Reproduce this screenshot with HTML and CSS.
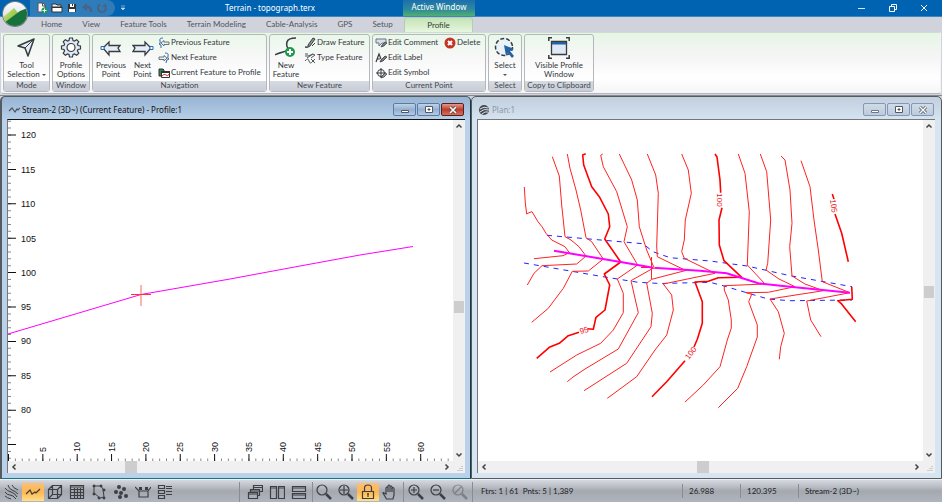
FILE: index.html
```html
<!DOCTYPE html>
<html lang="en">
<head>
<meta charset="utf-8">
<title>Terrain - topograph.terx</title>
<link rel="stylesheet" href="styles.css">
</head>
<body>
<div class="app">
  <header class="titlebar">
    <div class="quick">
      <button class="qbtn" aria-label="New"><svg viewBox="0 0 12 12"><path d="M2 1h5l2 2v7H2z" fill="#f4f6f8" stroke="#555"/><path d="M6.500 1v3h3" fill="none" stroke="#555"/><circle cx="8.500" cy="8.500" r="3" fill="#1f9a4c"/><path d="M8.500 6.500v4M6.500 8.500h4" stroke="#fff"/></svg></button>
      <button class="qbtn" aria-label="Open"><svg viewBox="0 0 12 12"><path d="M1 10V2h4l1 1h4v2" fill="#e9eef4" stroke="#333"/><path d="M1 10V5h10v5z" fill="#fff" stroke="#333"/><path d="M1 5h10v1H1z" fill="#333"/></svg></button>
      <button class="qbtn" aria-label="Save"><svg viewBox="0 0 12 12"><path d="M2 2h8v8H2z" fill="#333"/><path d="M4 2h4v3H4zM3 7h6v3H3z" fill="#fff"/><path d="M6 2h1v2H6z" fill="#333"/></svg></button>
      <button class="qbtn" aria-label="Undo"><svg viewBox="0 0 12 12"><path d="M4 5h3q3 0 3 5" fill="none" stroke="#4a6382" stroke-width="2.500"/><path d="M6 1v8L1 5z" fill="#4a6382"/></svg></button>
      <button class="qbtn" aria-label="Redo"><svg viewBox="0 0 12 12"><path d="M4 2.500a4 4 0 1 0 5 1" fill="none" stroke="#4a6382" stroke-width="2"/><path d="M10 1v4H6z" fill="#4a6382"/></svg></button>
    </div>
    <button class="qmore" aria-label="Customize toolbar"><svg viewBox="0 0 6 6"><path d="M1 1h4M1 3h4L3 5z" stroke="#c5d6e8" stroke-width=".6" fill="#c5d6e8"/></svg></button>
    <h1 class="title">Terrain - topograph.terx</h1>
    <div class="context">Active Window</div>
    <div class="winbtns">
      <button aria-label="Minimize"><svg viewBox="0 0 10 10"><path d="M1 5.500h7" stroke="#d9e8f5"/></svg></button>
      <button aria-label="Restore"><svg viewBox="0 0 10 10"><path d="M1.500 3.500h5v5h-5zM3.500 3V1.500h5v5H7" fill="none" stroke="#fff"/></svg></button>
      <button aria-label="Close"><svg viewBox="0 0 10 10"><path d="M2 2l6 6M8 2L2 8" stroke="#fff"/></svg></button>
    </div>
  </header>
  <button class="orb" aria-label="Application menu"><svg viewBox="0 0 28 28">
    <defs><clipPath id="orb"><circle cx="14" cy="14" r="12"/></clipPath>
    <linearGradient id="sky" x2="0" y2="1"><stop offset="0" stop-color="#fff"/><stop offset="1" stop-color="#c6d4d9"/></linearGradient>
    <linearGradient id="lime" x2="1" y2="1"><stop offset="0" stop-color="#d2ec8c"/><stop offset="1" stop-color="#73ad25"/></linearGradient></defs>
    <circle cx="14" cy="14" r="13" fill="#707d87"/>
    <g clip-path="url(#orb)"><path d="M0 0h28v28H0z" fill="url(#sky)"/><path d="M0 19L13 8l4 5-9 13H0z" fill="url(#lime)"/><path d="M3 23L19 11l5-2 4-1v20H3z" fill="#17713b"/></g></svg></button>

  <nav class="tabs">
    <a href="#">Home</a><a href="#">View</a><a href="#">Feature Tools</a><a href="#">Terrain Modeling</a><a href="#">Cable-Analysis</a><a href="#">GPS</a><a href="#">Setup</a><a href="#" class="on" aria-current="page">Profile</a>
  </nav>

  <section class="ribbon">
    <div class="group g-mode">
      <div class="body">
        <button class="big"><svg viewBox="0 0 22 22"><path d="M19 2L3 9l7 2 3 8z" fill="#e4edf8" stroke="#383c40" stroke-width="1.500" stroke-linejoin="round"/><path d="M18 3l-8 8" stroke="#383c40"/></svg><span>Tool<br>Selection <i class="caret"></i></span></button>
      </div>
      <h2>Mode</h2>
    </div>
    <div class="group g-window">
      <div class="body">
        <button class="big"><svg viewBox="0 0 22 22"><path d="M9.500 1h3l.5 2.500 1.500.6 2.200-1.400 2.100 2.100-1.400 2.200.6 1.500 2.500.5v3l-2.500.5-.6 1.500 1.400 2.200-2.100 2.100-2.200-1.400-1.500.6-.5 2.500h-3L9 17.500l-1.500-.6-2.200 1.400-2.100-2.100L4.600 14 4 12.500 1.500 12V9L4 8.500 4.600 7 3.200 4.800l2.100-2.100 2.200 1.400L9 3.500z" fill="#dfe9f6" stroke="#383c40" stroke-width="1.200"/><circle cx="11" cy="10.500" r="4" fill="#fff" stroke="#383c40" stroke-width="1.200"/></svg><span>Profile<br>Options</span></button>
      </div>
      <h2>Window</h2>
    </div>
    <div class="group g-nav">
      <div class="body">
        <button class="big"><svg viewBox="0 0 22 22"><path d="M3 11l6-6v3.500h11L18 11l2 3.500H9V18z" fill="#e4edf8" stroke="#383c40" stroke-width="1.300"/><path d="M1 9.500h3v3H1z" fill="#fff" stroke="#2a6aad"/></svg><span>Previous<br>Point</span></button>
        <button class="big"><svg viewBox="0 0 22 22"><path d="M19 11l-6-6v3.500H1L3 11l-2 3.500h12V18z" fill="#e4edf8" stroke="#383c40" stroke-width="1.300"/><path d="M18 9.500h3v3h-3z" fill="#fff" stroke="#2a6aad"/></svg><span>Next<br>Point</span></button>
        <div class="stack">
          <button class="small"><svg viewBox="0 0 12 12"><path d="M3 6l3-2.500V5h5v2.500H6V9z" fill="#e4edf8" stroke="#50555b" stroke-width=".8"/><path d="M5 1Q1 1 2 4T1 7q3 0 2 4" fill="none" stroke="#2a6aad"/></svg>Previous Feature</button>
          <button class="small"><svg viewBox="0 0 12 12"><path d="M9 6L6 3.500V5H1v2.500h5V9z" fill="#e4edf8" stroke="#50555b" stroke-width=".8"/><path d="M7 1q4 0 3 3t1 3q-3 0-3 4" fill="none" stroke="#2a6aad"/></svg>Next Feature</button>
          <button class="small"><svg viewBox="0 0 12 12"><path d="M1 2h4l1 1v6H1z" fill="#2f8b57" stroke="#333"/><path d="M3.500 4.500h8v6h-8z" fill="#fff" stroke="#333"/><path d="M3 4h9v2H3z" fill="#333"/><path d="M4 9q2-3 4-1t3-1" fill="none" stroke="#d03030"/></svg>Current Feature to Profile</button>
        </div>
      </div>
      <h2>Navigation</h2>
    </div>
    <div class="group g-feature">
      <div class="body">
        <button class="big"><svg viewBox="0 0 22 22"><path d="M21 1q-8 0-9 4t1 6-5 4-8 3" fill="none" stroke="#383c40" stroke-width="1.500"/><circle cx="15" cy="15" r="5" fill="#1f9a4c"/><path d="M15 12v6M12 15h6" stroke="#fff" stroke-width="2"/></svg><span>New<br>Feature</span></button>
        <div class="stack">
          <button class="small"><svg viewBox="0 0 12 12"><path d="M1 10q4 1 3-2l5-7 2 1-5 7q-2 2-5 1" fill="#90969d" stroke="#383c40"/><path d="M8 9l3-3" stroke="#383c40"/></svg>Draw Feature</button>
          <button class="small"><svg viewBox="0 0 12 12"><path d="M1 2h3M1 4h3l5-2M3 6l6-4 2 1-4 3M1 9q3-4 4 0t4 0l2-2M7 7l4 4" fill="none" stroke="#50555b"/></svg>Type Feature</button>
        </div>
      </div>
      <h2>New Feature</h2>
    </div>
    <div class="group g-point">
      <div class="body">
        <div class="stack">
          <button class="small"><svg viewBox="0 0 12 12"><path d="M1 2h10v4H7L4 9V6H1z" fill="#d4e0ee" stroke="#6c737b"/><path d="M6 10l1-2 3-3 2 1-3 3z" fill="#737b83" stroke="#383c40" stroke-width=".7"/></svg>Edit Comment</button>
          <button class="small"><svg viewBox="0 0 12 12"><path d="M1 10l3-8 2 5M2 7h3" fill="none" stroke="#383c40" stroke-width="1.200"/><path d="M5 10l1-2 4-4 2 1-4 4z" fill="#737b83" stroke="#383c40" stroke-width=".8"/></svg>Edit Label</button>
          <button class="small"><svg viewBox="0 0 12 12"><path d="M6 1v10M1 6h10" stroke="#383c40"/><circle cx="6" cy="6" r="3.500" fill="none" stroke="#383c40"/><path d="M6 11l1-2 3-3 2 1-3 3z" fill="#8d949c" stroke="#383c40" stroke-width=".7"/></svg>Edit Symbol</button>
        </div>
        <div class="stack">
          <button class="small"><svg viewBox="0 0 12 12"><circle cx="6" cy="6" r="5.500" fill="#c33425"/><path d="M4 4l4 4M8 4L4 8" stroke="#fff" stroke-width="2"/></svg>Delete</button>
        </div>
      </div>
      <h2>Current Point</h2>
    </div>
    <div class="group g-select">
      <div class="body">
        <button class="big"><svg viewBox="0 0 22 22"><circle cx="10" cy="10" r="8.500" fill="#e9f1f9" stroke="#383c40" stroke-width="1.500" stroke-dasharray="4 2"/><path d="M10 8l10 4-4 2 4 5-2 2-4-5-2 3z" fill="#2462a4"/></svg><span>Select<br><i class="caret"></i></span></button>
      </div>
      <h2>Select</h2>
    </div>
    <div class="group g-copy">
      <div class="body">
        <button class="big"><svg viewBox="0 0 22 22"><path d="M3.500 4.500h15v13h-15z" fill="#dfe9f6" stroke="#383c40" stroke-width="1.300"/><path d="M4 5h14v2.500H4z" fill="#2462a4"/><path d="M.8 4V.8H4M18 .8h3.200V4M.8 18v3.200H4M21.200 18v3.200H18" fill="none" stroke="#383c40" stroke-width="1.500"/></svg><span>Visible Profile<br>Window</span></button>
      </div>
      <h2>Copy to Clipboard</h2>
    </div>
  </section>

  <main class="desk">
    <section class="pane active">
      <header>
        <svg class="picon" viewBox="0 0 12 12"><path d="M1 7l3-3 3 4 2-3 1 1 2-2" fill="none" stroke="#4b545e" stroke-width="1.200"/></svg>
        <h2>Stream-2 (3D~) (Current Feature) - Profile:1</h2>
        <button aria-label="Minimize window"><svg viewBox="0 0 12 10"><path d="M2.500 5.500h7v2h-7z" fill="#fff" stroke="#505a66"/></svg></button>
        <button aria-label="Maximize window"><svg viewBox="0 0 12 10"><path d="M2.500 1.500h7v6h-7z" fill="#fff" stroke="#505a66"/><path d="M5 4h2v1H5z" stroke="#505a66"/></svg></button>
        <button class="close" aria-label="Close window"><svg viewBox="0 0 12 10"><path d="M3 2l6 6M9 2L3 8" stroke="#5c4040" stroke-width="3"/><path d="M3 2l6 6M9 2L3 8" stroke="#fff" stroke-width="1.600"/></svg></button>
      </header>
      <div class="client">
        <svg class="view" viewBox="8 120 445 341" preserveAspectRatio="xMinYMin meet">
          <path d="M9.500 120.740V461" stroke="#888" stroke-width="3" stroke-dasharray="1 5.880"/>
          <path d="M12 134.500V461" stroke="#111" stroke-width="8" stroke-dasharray="1 33.400"/>
          <path d="M8 460H453" stroke="#888" stroke-width="3" stroke-dasharray="1 5.870"/>
          <path d="M8 457.500H453" stroke="#111" stroke-width="7" stroke-dasharray="1 33.350"/>
          <g class="scale">
            <text x="21" y="138">120</text><text x="21" y="173">115</text><text x="21" y="207">110</text><text x="21" y="242">105</text><text x="21" y="276">100</text><text x="21" y="310">95</text><text x="21" y="344">90</text><text x="21" y="379">85</text><text x="21" y="413">80</text>
            <text transform="translate(46 452) rotate(-90)">5</text><text transform="translate(80 452) rotate(-90)">10</text><text transform="translate(115 452) rotate(-90)">15</text><text transform="translate(149 452) rotate(-90)">20</text><text transform="translate(183 452) rotate(-90)">25</text><text transform="translate(218 452) rotate(-90)">30</text><text transform="translate(252 452) rotate(-90)">35</text><text transform="translate(286 452) rotate(-90)">40</text><text transform="translate(321 452) rotate(-90)">45</text><text transform="translate(355 452) rotate(-90)">50</text><text transform="translate(390 452) rotate(-90)">55</text><text transform="translate(424 452) rotate(-90)">60</text>
          </g>
          <path d="M8 334L141 294.500 230 279 300 266 360 255 413 246.500" fill="none" stroke="#f0f"/>
          <path d="M141 285v21" stroke="#f99" stroke-width="1.500"/><path d="M131 294.500h20" stroke="#f33"/>
        </svg>
        <div class="vbar"><svg viewBox="0 0 12 12"><path d="M3.500 7.500L6 5l2.500 2.500" /></svg><span class="track"><i class="thumb v1"></i></span><svg viewBox="0 0 12 12"><path d="M3.500 4.500L6 7l2.500-2.500"/></svg></div>
        <div class="hbar"><svg viewBox="0 0 12 12"><path d="M7.500 3.500L5 6l2.500 2.500"/></svg><span class="track"><i class="thumb h1"></i></span><svg viewBox="0 0 12 12"><path d="M4.500 3.500L7 6 4.500 8.500"/></svg></div>
        <svg class="grip" viewBox="0 0 12 12"><path d="M9 5v5M7 7v3M5 9v1" stroke="#aaa" stroke-dasharray="1 1"/></svg>
      </div>
    </section>

    <section class="pane">
      <header>
        <svg class="picon" viewBox="0 0 12 12"><circle cx="6" cy="6" r="5" fill="#444b52"/><path d="M2 5q4-3 8-1M2 8q4-4 9-2M4 10q3-3 6-2" fill="none" stroke="#d8e0e8"/></svg>
        <h2>Plan:1</h2>
        <button aria-label="Minimize window"><svg viewBox="0 0 12 10"><path d="M2.500 5.500h7v2h-7z" fill="#fff" stroke="#6c7787"/></svg></button>
        <button aria-label="Maximize window"><svg viewBox="0 0 12 10"><path d="M2.500 1.500h7v6h-7z" fill="#fff" stroke="#505a66"/><path d="M5 4h2v1H5z" stroke="#505a66"/></svg></button>
        <button aria-label="Close window"><svg viewBox="0 0 12 10"><path d="M3 2l6 6M9 2L3 8" stroke="#505a66" stroke-width="3"/><path d="M3 2l6 6M9 2L3 8" stroke="#fff" stroke-width="1.400"/></svg></button>
      </header>
      <div class="client">
        <svg class="view" viewBox="478 120 445 341" preserveAspectRatio="xMinYMin meet">
          <g class="flood">
            <path d="M547 235.300L643 243.700 653 251.700 670 257.700 710 261 747 266 790 275.700 852 286.700"/>
            <path d="M524 263L603 276.700 638 282.300 660 283.500 710 282.300 723 285.700 768 299 790 300.700 852 300"/>
          </g>
          <g class="contour">
            <path d="M524.300 187L525.300 203 526.700 214 529 212.700 532 211.700 538 221.700 542 226.700 546 233.300 551.700 240 565 246.700 569.300 252.700 563 255.700 534 258.700"/>
            <path d="M552.300 156.700L559.300 176 561.700 205 565 236.700 571 240 579 246.700 586 256 576.700 264 542 265.700 534 273.300 527.300 285"/>
            <path d="M567.300 154L570 168.300 576 190 580.700 210 586 237.700 591.700 241.700 603.300 259 588.300 271 572.300 271.300 563.300 288.300 548.300 308.300 531.700 322.300"/>
            <path d="M602.700 154L600.700 155.300 603.300 166.700 616.700 191.700 627.300 226.700 624 241.700 637.700 265 617.300 279 623.300 293.300V312.700L613.300 330 600.700 343.300 576.700 355 550 372"/>
            <path d="M619.300 154L631.700 180 637.300 200 639.300 226.700 646.700 250 654 267.700 631 280.700 638.300 312.700 618.300 349 585 369 573 377 567.300 381.700"/>
            <path d="M647.300 154L655.700 175 658.300 193.300 656.700 246 657.300 256.700 685.700 270.500 651.700 279.300 646.700 283.300 652.300 313.300 651 326.700 626.700 363.300 584 390.700"/>
            <path d="M681.700 154L688.300 170 691.300 193.300 685.300 220 684.300 240 681.700 251.700 684.300 258.300 715 273.300 663.300 284 671.700 295 673.300 310 666.700 335 655 350 636.700 376.700 607.300 398.300"/>
            <path d="M738.300 154L745 173.300 749.300 211.700 747.300 265 765 284 724.300 285.700 724.300 290 728.300 300 731.300 320V328L727.300 340 720 366.700 703.300 385 685 402"/>
            <path d="M760.300 154L766.700 171.700 770.700 220 767.700 263.300 766 270 779 279 795 286.700 768.300 292.300 746 292.700 751.700 294.300 748.700 301.700 757.300 325V337L746.700 366.700 737.700 388.300 718.300 407.700"/>
            <path d="M781 156L785 160 790 190 792 223.300 789.700 246.700 792 276 805 284 823.300 290.700 770 299 778.300 311.700 784.300 333.300 780.700 346.700 779.300 359.300"/>
            <path d="M801 160.700L810 186.700 814 220 818.300 250 822.300 281.700 850 292.700 806.700 301 810.700 320 821 336.700"/>
            <path d="M651.500 257v22M641 267.500h17"/>
          </g>
          <g class="index">
            <path d="M585.700 153.700L582.700 155 583.700 165 591.700 186.700 599.300 196.700 608.300 214 609.700 226.700 604.700 239 620.700 262 604.300 274 609.700 285 605 310 596 317.300 593.300 329.300 587.300 328.700M579 332.300L568.300 335.700 559.300 343.300 549.300 347.300 536.700 358.300"/>
            <path d="M715 154L717 157 720 180 720.700 192.700M722 207.700L719 220 719.300 245 724 260.700 741.700 277.300 718.300 277.700 708.300 281.300 695 282 702.300 301.700V323.300L697.300 339.300 694 347M685 360.700L666.700 381.700 652 396.700"/>
            <path d="M832.300 194L834 199M835 214L841.700 233.300 848.300 261.700M851.700 286.700L852.300 299.300 837.700 300.700 841 303.300 855.700 321.700"/>
          </g>
          <g class="mark">
            <text transform="translate(584 330) rotate(-15)" dy="3">95</text>
            <text transform="translate(720 200) rotate(90)" dy="3">100</text>
            <text transform="translate(690.500 353) rotate(-52)" dy="3">100</text>
            <text transform="translate(834 206) rotate(82)" dy="3">105</text>
          </g>
          <path d="M554 250.700L620.700 262 653.300 267.700 700 270.700 726.700 273.300 758.300 283.300 790 286.700 850 292.700" fill="none" stroke="#f0f" stroke-width="2"/>
          <circle cx="654" cy="267.500" r="1" fill="#ff9c20"/>
        </svg>
        <div class="vbar"><svg viewBox="0 0 12 12"><path d="M3.500 7.500L6 5l2.500 2.500"/></svg><span class="track"><i class="thumb v2"></i></span><svg viewBox="0 0 12 12"><path d="M3.500 4.500L6 7l2.500-2.500"/></svg></div>
        <div class="hbar"><svg viewBox="0 0 12 12"><path d="M7.500 3.500L5 6l2.500 2.500"/></svg><span class="track"><i class="thumb h2"></i></span><svg viewBox="0 0 12 12"><path d="M4.500 3.500L7 6 4.500 8.500"/></svg></div>
        <svg class="grip" viewBox="0 0 12 12"><path d="M9 5v5M7 7v3M5 9v1" stroke="#aaa" stroke-dasharray="1 1"/></svg>
      </div>
    </section>
  </main>

  <footer class="status">
    <div class="tools t1">
      <button aria-label="Plan view"><svg viewBox="0 0 16 16"><path d="M2 4q2 3 6 4t6 5M2 8q2 3 5 3t6 4M2 12q2 2 6 3M5 1q1 4 4 5t6 4M9 1q1 3 6 5" stroke-width="1"/></svg></button>
      <button class="on" aria-label="Profile view"><svg viewBox="0 0 16 16"><path d="M1 10l4-4 2 4 3-2 1 1 4-4"/></svg></button>
      <button aria-label="3D view"><svg viewBox="0 0 16 16"><path d="M1.500 5.500h9v9h-9zM5.500 1.500h9v9h-9zM1.500 5.500l4-4M10.500 5.500l4-4M10.500 14.500l4-4M1.500 14.500l4-4"/></svg></button>
      <button aria-label="Grid view"><svg viewBox="0 0 16 16"><path d="M1.500 1.500h13v13h-13zM1 5.500h14M1 8.500h14M1 11.500h14M5.500 4v11M8.500 4v11M11.500 4v11M1 3h14"/></svg></button>
      <button aria-label="Nodes"><svg viewBox="0 0 16 16"><path d="M3 2h7l2 3 1 8-4 1-6-5z" stroke-width="1"/><path d="M2 1h2v2H2zM9 1h2v2H9zM12 5h2v2h-2zM12 13h2v2h-2zM7 13h2v2H7zM2 9h2v2H2z" fill="#3d4043" stroke-width=".6"/></svg></button>
      <button aria-label="Points"><svg viewBox="0 0 16 16" class="solid"><circle cx="6" cy="3" r="2"/><circle cx="11" cy="5" r="2"/><circle cx="3" cy="8" r="2"/><circle cx="8" cy="9" r="2"/><circle cx="7" cy="13" r="2"/><circle cx="13" cy="12" r="2"/></svg></button>
      <button aria-label="Section"><svg viewBox="0 0 16 16"><path d="M0 3l4 4v6h9V7l3-4M4 7h9"/><path d="M4 3h3v3H4zM10 3h3v3h-3z" fill="#3d4043" stroke="none"/></svg></button>
      <button aria-label="Report"><svg viewBox="0 0 16 16"><path d="M1.500 1.500h6v3h-6zM1.500 6.500h6v3h-6zM1.500 11.500h6v3h-6zM9 2.500h6M9 4.500h6M9 7.500h6M9 10.500h6"/></svg></button>
    </div>
    <div class="tools t2">
      <button aria-label="Cascade"><svg viewBox="0 0 16 16"><path d="M1.500 8.500h9v6h-9zM1.500 10h9M3.500 8V5.500h9v6H11M3.500 7h9M6.500 5V1.500h9v6H13M6.500 3.500h9"/></svg></button>
      <button aria-label="Tile vertically"><svg viewBox="0 0 16 16"><path d="M1.500 2.500h6v12h-6zM9.500 2.500h6v12h-6zM1 4h6M9 4h6"/></svg></button>
      <button aria-label="Tile horizontally"><svg viewBox="0 0 16 16"><path d="M1.500 2.500h13v5h-13zM1.500 9.500h13v5h-13zM1 4h14M1 11h14"/></svg></button>
    </div>
    <div class="tools t3">
      <button aria-label="Zoom window"><svg viewBox="0 0 16 16"><circle cx="6" cy="6" r="5"/><path d="M10 10l5 5" stroke-width="2.500"/></svg></button>
      <button aria-label="Zoom extents"><svg viewBox="0 0 16 16"><circle cx="6" cy="6" r="5"/><path d="M6 2v8M2 6h8"/><path d="M10 10l5 5" stroke-width="2.500"/></svg></button>
      <button class="on" aria-label="Lock"><svg viewBox="0 0 16 16"><path d="M4.500 7V4q0-3 3.500-3t3.500 3v3M2.500 7.500h11v7h-11z"/><path d="M8 9v4M7 10h2"/></svg></button>
      <button aria-label="Pan"><svg viewBox="0 0 16 16"><path d="M4.500 15L1 9q0-1 3 1V4q1-2 2 0V2q1-2 2 0v1q1-2 2 0v1q2-1 2 1v6l-1 4z"/><path d="M6 4v4M8 3v5M10 4v4"/></svg></button>
    </div>
    <div class="tools t4">
      <button aria-label="Zoom in"><svg viewBox="0 0 16 16"><circle cx="6" cy="6" r="5"/><path d="M6 3v6M3 6h6"/><path d="M10 10l5 5" stroke-width="2.500"/></svg></button>
      <button aria-label="Zoom out"><svg viewBox="0 0 16 16"><circle cx="6" cy="6" r="5"/><path d="M3 6h6"/><path d="M10 10l5 5" stroke-width="2.500"/></svg></button>
      <button disabled aria-label="Zoom previous"><svg viewBox="0 0 16 16"><circle cx="6" cy="6" r="5"/><path d="M3 9l6-6"/><path d="M10 10l5 5" stroke-width="2.500"/></svg></button>
    </div>
    <p class="cell c1">Ftrs: 1 | 61&nbsp; Pnts: 5 | 1,389</p>
    <p class="cell c2">26.988</p>
    <p class="cell c2">120.395</p>
    <p class="cell">Stream-2 (3D~)</p>
  </footer>
</div>
</body>
</html>
```
FILE: styles.css
```css
* { box-sizing: border-box; }
body {
  margin: 0;
  font: 8px/9px Lato, "Open Sans", sans-serif;
  color: #33373c;
}
h1, h2, p { margin: 0; font-size: inherit; font-weight: normal; }
button { margin: 0; padding: 0; border: 0; background: none; font: inherit; color: inherit; }
svg { display: block; flex: none; }
a { color: inherit; text-decoration: none; }

.app { position: relative; display: flex; flex-direction: column; height: 100vh; overflow: hidden; background: #d0d3dc; }

.titlebar { display: flex; flex: none; height: 17px; background: #0063b1; color: #fff; border-bottom: 1px solid #3f86bf; font-family: "Noto Sans", sans-serif; }
.quick { display: flex; align-items: center; gap: 3px; width: 85px; margin-left: 30px; padding-left: 6px; background: #2f7cba; border-radius: 0 8px 8px 0; }
.qbtn svg { width: 12px; height: 12px; }
.qmore { width: 16px; display: flex; align-items: center; justify-content: center; }
.qmore svg { width: 6px; height: 6px; }
.title { flex: none; width: 272px; padding-left: 94px; line-height: 15px; white-space: nowrap; }
.context { width: 72px; text-align: center; line-height: 14px; background: linear-gradient(#1b6fae, #2f8a9c 60%, #4fb070); }
.winbtns { display: flex; margin-left: auto; gap: 21px; padding-right: 13px; align-items: center; }
.winbtns svg { width: 10px; height: 10px; }
.orb { position: absolute; left: 1px; top: 0; z-index: 2; }
.orb svg { width: 28px; height: 28px; }

.tabs { display: flex; flex: none; height: 15px; padding-left: 31px; padding-right: calc(100% - 473px); color: #50555c; line-height: 15px; }
.tabs a { flex: none; padding: 0 10px; white-space: nowrap; }
.tabs .on { width: 69px; margin-left: auto; text-align: center; color: #33402f; background: linear-gradient(#c3e3b5, #e6f6e0); border: 1px solid #b6cdb0; border-bottom: 0; border-radius: 3px 3px 0 0; }

.ribbon { display: flex; flex: none; gap: 2px; height: 62px; margin: 0 1px; padding: 1px; border: 1px solid #f2f4f6; border-top-color: #cfdccf; border-bottom-color: #b4b7bf; background: linear-gradient(#e5f6e4, #eef5ee 20%, #f5f5f5 40%, #fff 75%, #f5f5f7); border-radius: 0 0 3px 3px; }
.group { display: flex; flex-direction: column; flex: none; border: 1px solid #b4b8bd; border-radius: 3px; background: linear-gradient(#eaf7ea, #f7f8f7 40%, #fff 80%); overflow: hidden; }
.group h2 { height: 10px; line-height: 9px; text-align: center; background: linear-gradient(#d6dae2, #c9cdd7); color: #44484e; white-space: nowrap; }
.body { display: flex; flex: 1; justify-content: center; }
.g-mode { width: 47px; }
.g-window { width: 38px; }
.g-nav { width: 175px; }
.g-feature { width: 101px; }
.g-point { width: 114px; }
.g-select { width: 34px; }
.g-copy { width: 70px; }
.big { display: flex; flex-direction: column; align-items: center; gap: 2px; padding-top: 2px; white-space: nowrap; }
.big svg { width: 22px; height: 22px; }
.g-nav .body, .g-feature .body, .g-point .body { justify-content: flex-start; }
.g-nav .big { width: 27px; }
.g-nav .big:first-child { width: 36px; }
.g-feature .big { width: 32px; }
.stack { display: flex; flex-direction: column; padding-left: 2px; }
.g-point .stack:first-child { width: 69px; }
.small { display: flex; align-items: center; height: 15px; gap: 1px; white-space: nowrap; }
.small svg { width: 12px; height: 12px; }
.caret { display: inline-block; border: 2px solid transparent; border-top-color: #50555c; border-bottom: 0; vertical-align: middle; }

.desk { display: flex; flex: 1; min-height: 0; margin-top: 1px; border-top: 1px solid #888a8e; }
.pane { display: flex; flex-direction: column; flex: 1; min-width: 0; padding: 1px 6px 5px 5px; border: 1px solid #565b60; border-radius: 5px 5px 0 0; background: linear-gradient(#c1cfde, #d7e4f2 24px); }
.pane.active { padding-right: 5px; border-left-width: 2px; border-right-color: #123c42; border-bottom-color: #157580; background: linear-gradient(#97b4d3, #b9d1ea 24px); }
.pane.active h2 { color: #111; }
.pane header { display: flex; align-items: center; flex: none; height: 21px; gap: 1px; padding: 2px 1px 0; font-family: "Noto Sans", sans-serif; }
.pane h2 { flex: 1; padding-left: 1px; color: #8b98a5; white-space: nowrap; }
.picon { width: 12px; height: 12px; }
.pane header button { display: flex; justify-content: center; align-items: center; width: 23px; height: 13px; border: 1px solid #8696b4; border-radius: 2px; background: linear-gradient(#d0dbe8, #bccbdd); }
.active header button { border-color: #5c7ba4; background: linear-gradient(#c0d3e8, #94b0d0 50%, #b1cae6); }
.active header .close { border-color: #5b1f21; background: linear-gradient(#e39a8a, #bd3f2b 50%, #d2705c); }
.pane header svg { height: 10px; width: 12px; }
.pane header .picon { height: 12px; }
.client { flex: 1; min-height: 0; display: grid; grid-template: minmax(0, 1fr) 12px / minmax(0, 1fr) 12px; background: #fff; border-top: 1px solid #777; border-left: 1px solid #777; }
.active .client { border-top-color: #111; }
.view { width: 100%; height: 100%; }
.vbar, .hbar, .grip { background: #f0f0f0; }
.vbar { display: flex; flex-direction: column; }
.hbar { display: flex; }
.vbar svg, .hbar svg, .grip { width: 12px; height: 12px; fill: none; stroke: #444; stroke-width: 1.5; }
.grip { stroke-width: 1; }
.track { flex: 1; display: flex; }
.vbar .track { flex-direction: column; }
.thumb { background: #cdcdcd; }
.vbar .thumb { height: 12px; margin: 0 1px; }
.hbar .thumb { width: 12px; }
.vbar .v1 { margin-top: 169px; }
.vbar .v2 { margin-top: 154px; }
.h1 { margin-left: 105px; }
.h2 { margin-left: 207px; }

.scale { font: 9px "Liberation Sans", sans-serif; fill: #111; }
.contour, .index, .flood { fill: none; stroke: #f22; stroke-width: 1; stroke-linejoin: round; }
.index { stroke: #f00; stroke-width: 1.6; }
.flood { stroke: #22f; stroke-dasharray: 5 5; }
.mark { font: 8px "Liberation Sans", sans-serif; fill: #e11; text-anchor: middle; }

.status { display: flex; flex: none; height: 23px; padding-top: 2px; border-top: 1px solid #eceef2; background: linear-gradient(#d6d9df, #b9bdc5 30%, #a4a8af 50%, #b0b4bd); color: #222; }
.tools { display: flex; align-items: center; flex: none; border-right: 1px solid #898c93; }
.tools button { display: flex; align-items: center; justify-content: center; width: 22px; height: 18px; }
.tools svg { width: 16px; height: 16px; fill: none; stroke: #3d4043; stroke-width: 1.2; }
.tools .solid { fill: #3d4043; stroke: none; }
.tools .on { background: linear-gradient(#f9c078, #ffb64e 50%, #ffe08a); }
.tools :disabled { opacity: .4; }
.t1 { width: 240px; }
.t2 { width: 73px; padding-left: 4px; }
.t3 { width: 91px; }
.t4 { width: 69px; padding-left: 1px; }
.cell { height: 14px; margin-top: 2px; padding-left: 6px; line-height: 14px; border-left: 1px solid #898c93; white-space: nowrap; }
.c1 { width: 209px; padding-left: 8px; border-left: 0; }
.c2 { width: 58px; }
```
